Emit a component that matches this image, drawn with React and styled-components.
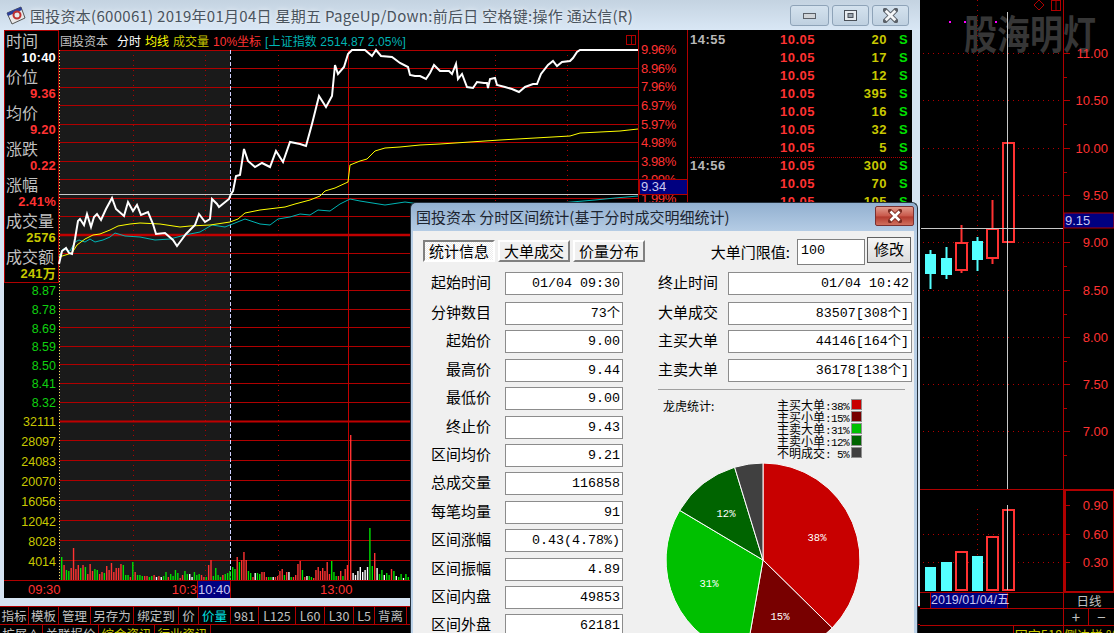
import React from "react";
import styled, { createGlobalStyle } from "styled-components";

const CJK = `"Noto Sans CJK SC", sans-serif`;
const NUM = `"Liberation Sans", "Noto Sans CJK SC", sans-serif`;
const MONO = `"Liberation Mono", "Noto Sans CJK SC", monospace`;

const RED = "#ff3232";
const LINE = "#b00000";
const OLIVE = "#c8c800";

const GlobalStyle = createGlobalStyle`
  html, body {
    margin: 0;
    background: #000;
    overflow: hidden;
  }
  * { box-sizing: border-box; }
`;

const Desktop = styled.div`
  position: relative;
  display: flex;
  width: 1114px;
  height: 633px;
  overflow: hidden;
  font-family: ${CJK};
`;

/* main window */
const MainWindow = styled.div`
  display: flex;
  flex-direction: column;
  width: 920px;
  height: 633px;
  background: #d6e4f2;
`;

const TitleBar = styled.div`
  display: flex;
  align-items: center;
  height: 31px;
  padding: 0 11px 0 6px;
  background: linear-gradient(#c4d3e1, #d9e7f5);
`;

const TitleText = styled.div`
  flex: 1;
  margin-left: 4px;
  font-size: 15px;
  letter-spacing: 0.28px;
  color: #4a545e;
  white-space: nowrap;
  text-shadow: 0 0 5px rgba(255, 255, 255, 0.9);
`;

const WinButtons = styled.div`
  display: flex;
  gap: 3px;
  margin-top: 1px;
`;

const WinButton = styled.div`
  display: flex;
  align-items: center;
  justify-content: center;
  width: ${(p) => p.$w}px;
  height: 21px;
  border: 1px solid #8ea3b8;
  border-radius: 3px;
  background: linear-gradient(#d4e2ee, #bfd0e0);
`;

const Pane = styled.div`
  display: grid;
  grid-template-columns: 55px 579px 50px 224px;
  grid-template-rows: 550px 18px;
  width: 908px;
  height: 568px;
  margin-left: 4px;
  background: #000;
  font-family: ${NUM};
`;

const LeftCol = styled.div`
  display: flex;
  flex-direction: column;
`;

const InfoBox = styled.div`
  height: 253px;
  margin-bottom: 1px;
  border: 1px solid ${LINE};
`;

const InfoLabel = styled.div`
  height: 18px;
  padding-left: 1px;
  font-family: ${CJK};
  font-size: 16px;
  line-height: 18px;
  color: #c0c0c0;
  white-space: nowrap;
`;

const InfoValue = styled.div`
  height: 18px;
  padding-right: 2px;
  font-size: 13px;
  font-weight: 700;
  letter-spacing: 0.2px;
  line-height: 18px;
  text-align: right;
  white-space: nowrap;
  color: ${(p) => p.$color};
`;

const AxisGroup = styled.div`
  display: flex;
  flex-direction: column;
  gap: ${(p) => p.$gap}px;
  margin-top: ${(p) => p.$top}px;
`;

const AxisLabel = styled.div`
  height: 12px;
  padding-right: 3px;
  font-size: 12.5px;
  line-height: 12px;
  text-align: right;
  color: ${(p) => p.$color};
`;

const PlotCol = styled.div`
  display: flex;
  flex-direction: column;
`;

const PlotHead = styled.div`
  display: flex;
  align-items: center;
  gap: 4px;
  height: 20px;
  padding: 0 2px 0 1px;
  font-size: 12px;
  white-space: nowrap;
`;

const HeadItem = styled.span`
  color: ${(p) => p.$color};
  margin-left: ${(p) => p.$gap || 0}px;
  letter-spacing: ${(p) => p.$spaced || 0}px;
`;

const SplitBox = styled.span`
  width: 10px;
  height: 10px;
  margin-left: auto;
  border: 1px solid ${LINE};
  background: linear-gradient(${LINE}, ${LINE}) center / 1px 100% no-repeat;
`;

const ChartSvg = styled.svg`
  display: block;
  overflow: visible;
`;

const RightAxis = styled.div`
  position: relative;
  display: flex;
  flex-direction: column;
  gap: 6.6px;
  padding: 14px 0 0 2px;
  border-left: 1px solid ${LINE};
  border-right: 1px solid ${LINE};
  overflow: hidden;
`;

const AxisPct = styled.div`
  height: 12px;
  font-size: 13px;
  letter-spacing: -0.4px;
  line-height: 12px;
  color: ${RED};
`;

const CursorPrice = styled.div`
  position: absolute;
  left: 0;
  top: 149px;
  width: 49px;
  height: 16px;
  padding-left: 1px;
  border: 1px solid ${LINE};
  background: #000080;
  font-size: 13px;
  line-height: 14px;
  color: #c8c8f0;
`;

const Trades = styled.div`
  grid-column: 4;
  grid-row: 1 / 3;
  padding-top: 1px;
  overflow: hidden;
`;

const TradeRow = styled.div`
  display: grid;
  grid-template-columns: 40px 85px 72px 27px;
  height: 18px;
  margin-left: 2px;
  border-top: ${(p) => (p.$split ? `1px dotted ${LINE}` : "0")};
  font-size: 13px;
  font-weight: 700;
  letter-spacing: 0.5px;
  line-height: ${(p) => (p.$split ? 16 : 18)}px;
`;

const TradeTime = styled.span`
  color: #b8b8b8;
`;

const TradeNum = styled.span`
  text-align: right;
  color: ${(p) => p.$color};
`;

const TradeSide = styled.span`
  padding-left: 12px;
  color: #00e000;
`;

const TimeRow = styled.div`
  grid-column: 1 / 4;
  grid-row: 2;
  display: grid;
  grid-template-columns: 193px 34px 1fr;
  border-top: 1px solid ${LINE};
  font-size: 13px;
  line-height: 17px;
  color: ${RED};
`;

const TimeLeft = styled.div`
  display: flex;
  justify-content: space-between;
  padding-left: 24px;
`;

const TimeCursor = styled.div`
  border-left: 1px solid ${LINE};
  border-right: 1px solid ${LINE};
  background: #000080;
  text-align: center;
  color: #c8c8f0;
`;

const TimeRight = styled.div`
  padding-left: 89px;
`;

const Band = styled.div`
  height: 8px;
`;

const TabBar = styled.div`
  flex: 1;
  border-top: 1px solid ${LINE};
  background: #000;
`;

const TabRow = styled.div`
  display: flex;
  height: ${(p) => p.$h}px;
  border-bottom: ${(p) => (p.$last ? "0" : `1px solid ${LINE}`)};
  overflow: hidden;
`;

const Tab = styled.div`
  width: ${(p) => p.$w}px;
  flex: none;
  border-right: 1px solid ${LINE};
  font-size: 12.5px;
  line-height: 18px;
  text-align: center;
  white-space: nowrap;
  color: ${(p) => p.$color || "#c0c0c0"};
`;

/* candle window on the right */
const SideWindow = styled.div`
  display: flex;
  flex-direction: column;
  width: 194px;
  height: 633px;
  background: #000;
  font-family: ${NUM};
`;

const SideRow = styled.div`
  display: grid;
  grid-template-columns: ${(p) => p.$cols};
  height: ${(p) => p.$h}px;
  border-top: 1px solid ${LINE};
  overflow: hidden;
`;

const DateCell = styled.div`
  padding-left: 10px;
`;

const DateBox = styled.div`
  width: 78px;
  height: 15px;
  border-left: 1px solid ${LINE};
  border-right: 1px solid ${LINE};
  background: #000080;
  font-size: 12.5px;
  line-height: 15px;
  text-align: center;
  white-space: nowrap;
  color: #c8c8f0;
`;

const SideCell = styled.div`
  border-left: ${(p) => (p.$edge ? `1px solid ${LINE}` : "0")};
  font-family: ${CJK};
  font-size: ${(p) => p.$size || 12.5}px;
  line-height: ${(p) => p.$line || 15}px;
  text-align: center;
  white-space: nowrap;
  color: ${(p) => p.$color || "#c0c0c0"};
`;

/* statistics dialog */
const Dialog = styled.div`
  position: absolute;
  left: 410px;
  top: 202px;
  width: 508px;
  height: 431px;
  display: flex;
  flex-direction: column;
  padding: 0 3px 0 2px;
  border: 1px solid #24303c;
  border-bottom: 0;
  border-radius: 6px 6px 0 0;
  background: linear-gradient(#92b0d0, #b7cee6 30px, #bcd2e8);
  overflow: hidden;
`;

const DialogTitle = styled.div`
  display: flex;
  align-items: center;
  justify-content: space-between;
  flex: none;
  height: 28px;
  padding: 0 0 2px 3px;
  font-size: 15px;
  color: #1c2430;
  white-space: nowrap;
`;

const CloseButton = styled.div`
  display: flex;
  align-items: center;
  justify-content: center;
  width: 39px;
  height: 20px;
  border: 1px solid #7a3030;
  border-radius: 2px;
  background: linear-gradient(#e09a8c, #c9584a 50%, #b23a2e 55%, #d0705e);
`;

const DialogBody = styled.div`
  flex: 1;
  padding-top: 6px;
  background: #f0f0f0;
  color: #000;
`;

const DialogTop = styled.div`
  display: flex;
  align-items: flex-start;
  height: 35px;
  padding: 3px 0 0 10px;
`;

const RaisedTab = styled.div`
  width: 72px;
  height: 22px;
  margin-right: 3px;
  border: 2px solid;
  border-color: ${(p) =>
    p.$active ? "#808080 #fff #fff #808080" : "#fff #808080 #808080 #fff"};
  background: ${(p) =>
    p.$active
      ? "repeating-conic-gradient(#fff 0 25%, #ececec 0 50%) 0 0 / 2px 2px"
      : "#f0f0f0"};
  font-size: 15px;
  line-height: 17px;
  text-align: center;
`;

const Threshold = styled.div`
  display: flex;
  align-items: flex-start;
  margin-left: auto;
  margin-top: -3px;
  padding-right: 3px;
`;

const ThresholdLabel = styled.span`
  margin-top: 3px;
  margin-right: 7px;
  font-size: 15px;
  line-height: 24px;
`;

const ThresholdInput = styled.div`
  width: 68px;
  height: 26px;
  margin-top: 2px;
  padding-left: 3px;
  border: 1px solid #808080;
  background: #fff;
  font-family: ${MONO};
  font-size: 13.33px;
  line-height: 22px;
`;

const ThresholdButton = styled.div`
  width: 44px;
  height: 26px;
  margin-left: 2px;
  border: 1px solid #606060;
  background: linear-gradient(#f6f6f6, #dcdcdc);
  font-size: 15px;
  line-height: 22px;
  text-align: center;
`;

const Columns = styled.div`
  display: flex;
`;

const StatGrid = styled.div`
  display: grid;
  grid-template-columns: ${(p) => p.$label}px ${(p) => p.$box}px;
  grid-template-rows: 30px repeat(${(p) => p.$rows}, 28.4px);
  column-gap: ${(p) => p.$gap}px;
  align-content: start;
`;

const StatName = styled.div`
  height: 23px;
  font-size: 15px;
  line-height: 20px;
  text-align: right;
  white-space: nowrap;
`;

const StatBox = styled.div`
  height: 23px;
  padding-right: 2px;
  border: 1px solid #8c8c8c;
  background: #fff;
  font-family: ${MONO};
  font-size: 13.33px;
  line-height: 21px;
  text-align: right;
  white-space: nowrap;
`;

const LeftStats = styled.div`
  width: 246px;
`;

const RightStats = styled.div`
  width: 257px;
`;

const Separator = styled.div`
  width: 247px;
  height: 1px;
  margin-top: 2px;
  background: #a0a0a0;
`;

const StatsHead = styled.div`
  display: flex;
  justify-content: space-between;
  width: 204px;
  height: 73px;
  padding: 8px 0 0 5px;
`;

const StatsTitle = styled.div`
  font-size: 12px;
  line-height: 16px;
`;

const Legend = styled.div`
  display: flex;
  flex-direction: column;
`;

const LegendRow = styled.div`
  display: flex;
  align-items: center;
  justify-content: space-between;
  width: 85px;
  height: 12px;
  font-family: ${MONO};
  font-size: 11px;
  letter-spacing: -0.6px;
  white-space: pre;
`;

const LegendName = styled.span`
  font-family: ${CJK};
  font-size: 12px;
  letter-spacing: 0;
`;

const Swatch = styled.span`
  width: 11px;
  height: 11px;
  border: 1px solid #909090;
  background: ${(p) => p.$color};
`;

const PieSvg = styled.svg`
  display: block;
  margin-left: 2px;
`;

/* data */
const INFO = [
  ["时间", "10:40", "#fff"],
  ["价位", "9.36", RED],
  ["均价", "9.20", RED],
  ["涨跌", "0.22", RED],
  ["涨幅", "2.41%", RED],
  ["成交量", "2576", OLIVE],
  ["成交额", "241万", OLIVE],
];

const PRICES = ["8.87", "8.78", "8.69", "8.59", "8.50", "8.41", "8.32"];
const VOLS = ["32111", "28097", "24083", "20070", "16056", "12042", "8028", "4014"];
const PCTS = ["9.96%", "8.96%", "7.96%", "6.97%", "5.97%", "4.98%", "3.98%", "2.99%", "1.99%"];

const GRID_Y = [51, 69, 88, 106, 125, 143, 162, 180, 199, 217, 254, 273, 291, 310, 328, 347, 365, 384, 403, 441, 461, 481, 501, 521, 541, 561];
const DOT_X = [133, 205, 278, 495, 567];

const PRICE_LINE =
  "59,265 62,252 66,249 69,254 72,255 75,240 78,222 80,220 84,226 87,215 91,228 94,218 97,215 101,221 106,210 112,199 116,210 124,217 128,203 133,212 137,206 141,216 148,213 153,225 156,235 165,234 173,241 177,247 180,243 186,235 195,226 199,215 205,223 210,220 212,200 217,205 219,208 229,200 231,195 233,192 236,177 240,176 244,150 248,162 255,168 262,164 270,168 276,152 283,163 290,143 300,145 306,147 312,125 319,97 326,108 332,97 335,66 338,75 344,68 348,55 352,51 365,51 372,57 376,51 381,57 392,58 400,64 408,68 410,76 415,77 420,77 426,80 430,74 434,66 440,72 449,72 452,75 456,65 458,80 462,75 467,88 473,89 477,83 484,84 487,84 488,89 490,80 495,79 497,86 505,88 512,90 519,93 525,88 533,85 537,85 541,75 548,66 553,62 557,67 562,63 570,62 573,59 577,53 580,51 638,51";
const AVG_LINE =
  "59,258 72,254 77,246 85,240 93,236 100,235 110,231 118,227 130,225 140,224 160,225 180,228 190,227 210,226 230,223 238,220 245,214 260,211 285,208 295,205 310,201 320,197 325,192 335,189 348,183 350,166 360,162 367,160 375,152 385,149 400,148 420,146 440,145 500,141 570,137 580,134 600,133 620,132 638,130";
const INDEX_LINE =
  "59,258 63,250 70,252 75,243 79,241 85,243 90,240 95,243 103,241 110,238 115,234 125,237 140,238 155,241 170,240 185,236 200,233 212,226 225,228 240,222 245,220 260,225 270,226 278,220 290,218 300,215 310,216 318,211 330,212 340,205 350,200 360,202 385,206 405,203 420,205 560,204 595,201 615,199 638,197";

const BAR_COLORS = { r: "#ff3232", g: "#00e000", w: "#ffffff" };
const parseBars = (text, start, step) =>
  text.split(" ").map((item, i) => ({
    x: start + i * step,
    h: parseInt(item, 10),
    color: BAR_COLORS[item.slice(-1)],
  }));

const BARS = [
  ...parseBars(
    "23g 15r 10g 9g 12r 32r 11r 15r 12g 15r 13g 6r 16r 9r 11g 10g 6r 8r 7g 14r 10r 17r 8r 12r 12r 16r 15g 5g 5g 3r 18g 8r 5g 5g 4g 4r 4r 3g 4g 5r 3w 4r 3w 4g 8g 3r 6g 4g 10g 7g 2r 5r 9g 6g 6w 3w 8g 5g 6g 5r 3r 3g 15r 20r 4g 12g 5g 3g 5r 6g 7g 9g",
    61,
    2.37
  ),
  ...parseBars(
    "13g 11g 23r 18g 20r 28r 20r 9g 7g 3r 7w 7g 6g 8r 8r 3r 3g 3g 3w 3r 4r 9r 11r 5g 8r 8w 3g 3r 5r 16r 19r 10g 3r 4w 4g 3g 2r 10r 13r 9r 12r 9r 18r 6r 19g 8g 4g 4r 9r 4g 11r 15r",
    232,
    2.25
  ),
  ...parseBars(
    "145r 7w 5w 9w 13w 8w 10w 13w 52g 14g 27r 12w 6g 10g 5w 7g 5g 11r 9g 4w 3g 6g 2w 6g 3g",
    350,
    2.4
  ),
];

const TRADES = [
  ["14:55", 20],
  ["", 17],
  ["", 12],
  ["", 395],
  ["", 16],
  ["", 32],
  ["", 5],
  ["14:56", 300],
  ["", 70],
  ["", 105],
];

const TABS_TOP = [
  ["指标", 29],
  ["模板", 30],
  ["管理", 32],
  ["另存为", 43],
  ["绑定到", 45],
  ["价", 20],
  ["价量", 32, "#00e0e0"],
  ["981", 28],
  ["L125", 37],
  ["L60", 29],
  ["L30", 29],
  ["L5", 21],
  ["背离", 32],
];
const TABS_BOTTOM = [
  ["扩展∧", 43],
  ["关联报价", 56],
  ["综合资讯", 56, OLIVE],
  ["行业资讯", 56, OLIVE],
];

const LEFT_STATS = [
  ["起始时间", "01/04 09:30"],
  ["分钟数目", "73个"],
  ["起始价", "9.00"],
  ["最高价", "9.44"],
  ["最低价", "9.00"],
  ["终止价", "9.43"],
  ["区间均价", "9.21"],
  ["总成交量", "116858"],
  ["每笔均量", "91"],
  ["区间涨幅", "0.43(4.78%)"],
  ["区间振幅", "4.89"],
  ["区间内盘", "49853"],
  ["区间外盘", "62181"],
];
const RIGHT_STATS = [
  ["终止时间", "01/04 10:42"],
  ["大单成交", "83507[308个]"],
  ["主买大单", "44146[164个]"],
  ["主卖大单", "36178[138个]"],
];

const PIE = [
  { name: "主买大单", pct: "38%", color: "#c80000", to: 134.5, lx: 817, ly: 537 },
  { name: "主买小单", pct: "15%", color: "#780000", to: 190, lx: 780, ly: 616 },
  { name: "主卖大单", pct: "31%", color: "#00c000", to: 300.8, lx: 709, ly: 583 },
  { name: "主卖小单", pct: "12%", color: "#006400", to: 343, lx: 726, ly: 513 },
  { name: "不明成交", pct: " 5%", color: "#404040", to: 360 },
];

const CANDLES = [
  { x: 925, w: 11, top: 254, bot: 274, hi: 250, lo: 289, up: false },
  { x: 941, w: 11, top: 258, bot: 275, hi: 247, lo: 279, up: false },
  { x: 956, w: 11, top: 243, bot: 270, hi: 225, lo: 273, up: true },
  { x: 972, w: 11, top: 241, bot: 260, hi: 237, lo: 271, up: false },
  { x: 987, w: 11, top: 229, bot: 258, hi: 200, lo: 264, up: true },
  { x: 1003, w: 11, top: 143, bot: 242, hi: 143, lo: 242, up: true },
];
const VOL_BARS = [
  { x: 925, top: 567, up: false },
  { x: 941, top: 562, up: false },
  { x: 956, top: 552, up: true },
  { x: 972, top: 556, up: false },
  { x: 987, top: 537, up: true },
  { x: 1003, top: 510, up: true },
];
const SIDE_TICKS = [
  [53, "11.00"],
  [100, "10.50"],
  [148, "10.00"],
  [195, "9.50"],
  [242, "9.00"],
  [290, "8.50"],
  [337, "8.00"],
  [384, "7.50"],
  [431, "7.00"],
];

const CANDLE_UP = "#ff3232";
const CANDLE_DOWN = "#54ffff";

const AppIcon = () => (
  <svg width="20" height="20" viewBox="0 0 20 20">
    <path d="M1 8 L15 2 L19 13 L6 19 Z" fill="#e8e8e8" stroke="#555" />
    <path d="M1 8 L15 2 L16 5 L2 11 Z" fill="#2a3f9a" />
    <circle cx="11" cy="10" r="3.5" fill="none" stroke="#c03030" strokeWidth="2" />
  </svg>
);

const XGlyph = ({ size, color, edge }) => (
  <svg width={size} height={size} viewBox="0 0 14 14">
    <path d="M2 2 L12 12 M12 2 L2 12" stroke={edge} strokeWidth="4.5" strokeLinecap="round" />
    <path d="M2.5 2.5 L11.5 11.5 M11.5 2.5 L2.5 11.5" stroke={color} strokeWidth="2.6" />
  </svg>
);

const MainChart = () => (
  <ChartSvg width="579" height="530" viewBox="59 51 579 530">
    <rect x="59" y="51" width="171" height="530" fill="#1a1a1a" />
    {GRID_Y.map((y) => (
      <line key={y} x1="59" x2="638" y1={y + 0.5} y2={y + 0.5} stroke={LINE} />
    ))}
    <line x1="59" x2="638" y1="236" y2="236" stroke="#c00000" strokeWidth="2.5" />
    <line x1="59" x2="638" y1="422.5" y2="422.5" stroke="#c00000" strokeWidth="2" />
    {DOT_X.map((x) => (
      <line key={x} x1={x + 0.5} x2={x + 0.5} y1="51" y2="581" stroke={LINE} strokeDasharray="1 4" />
    ))}
    <line x1="348.5" x2="348.5" y1="51" y2="581" stroke="#c00000" />
    <line x1="59.5" x2="59.5" y1="51" y2="581" stroke="#ffe060" strokeDasharray="1 2" />
    <line x1="230.5" x2="230.5" y1="51" y2="581" stroke="#d0d0ff" strokeDasharray="4 2" />
    <line x1="59" x2="638" y1="195.5" y2="195.5" stroke="#c8c8c8" />
    {BARS.map((b) => (
      <rect key={b.x} x={b.x} y={581 - b.h} width="1.4" height={b.h} fill={b.color} />
    ))}
    <polyline points={INDEX_LINE} fill="none" stroke="#00b4b4" />
    <polyline points={AVG_LINE} fill="none" stroke="#ffff00" />
    <polyline points={PRICE_LINE} fill="none" stroke="#fff" strokeWidth="2" />
  </ChartSvg>
);

const Candle = ({ c }) => {
  const color = c.up ? CANDLE_UP : CANDLE_DOWN;
  const mid = c.x + c.w / 2;
  return (
    <>
      <line x1={mid} x2={mid} y1={c.hi} y2={c.lo} stroke={color} strokeWidth="2" />
      {c.up ? (
        <rect x={c.x} y={c.top} width={c.w} height={c.bot - c.top} fill="#000" stroke={color} strokeWidth="2" />
      ) : (
        <rect x={c.x} y={c.top} width={c.w} height={c.bot - c.top} fill={color} />
      )}
    </>
  );
};

const SideChart = () => (
  <ChartSvg width="194" height="489" viewBox="920 0 194 489">
    <g fontFamily={CJK} fontWeight="700" fontSize="33" fill="#363636">
      <text transform="translate(964 49) scale(1 1.2)">股海明灯</text>
    </g>
    {SIDE_TICKS.map(([y]) => (
      <line key={y} x1="923" x2="1063" y1={y + 0.5} y2={y + 0.5} stroke={LINE} strokeDasharray="1 4" />
    ))}
    <line x1="977.5" x2="977.5" y1="0" y2="489" stroke={LINE} strokeDasharray="1 4" />
    <rect x="949" y="21" width="2" height="2" fill="#ff00ff" />
    <rect x="964" y="21" width="2" height="2" fill="#ff00ff" />
    <rect x="995" y="21" width="2" height="2" fill="#ff00ff" />
    {CANDLES.map((c) => (
      <Candle key={c.x} c={c} />
    ))}
    <line x1="1007.5" x2="1007.5" y1="12" y2="489" stroke="#c8c8c8" />
    <line x1="921" x2="1063" y1="228.5" y2="228.5" stroke="#c8c8c8" />
    <path d="M1039 0 L1044 5 L1039 10 L1034 5 Z" fill="none" stroke={LINE} />
    <rect x="1051.5" y="0.5" width="9" height="10" fill="none" stroke={LINE} />
    <line x1="1056" x2="1056" y1="0" y2="10" stroke={LINE} />
    <line x1="1063.5" x2="1063.5" y1="0" y2="489" stroke={LINE} />
    {SIDE_TICKS.map(([y, label]) => (
      <g key={label}>
        <line x1="1063" x2="1070" y1={y + 0.5} y2={y + 0.5} stroke={LINE} />
        <line x1="1063" x2="1067" y1={y + 24.5} y2={y + 24.5} stroke={LINE} />
        <text x="1108" y={y + 5} textAnchor="end" fontFamily={NUM} fontSize="13" fill={RED}>
          {label}
        </text>
      </g>
    ))}
    <rect x="1064" y="213" width="50" height="15" fill="#000080" stroke={LINE} />
    <text x="1065" y="225" fontFamily={NUM} fontSize="13" fill="#c8c8f0">
      9.15
    </text>
  </ChartSvg>
);

const SideVolume = () => (
  <ChartSvg width="194" height="103" viewBox="920 489 194 103">
    <line x1="920" x2="1063" y1="489.5" y2="489.5" stroke={LINE} />
    {[534, 562].map((y) => (
      <line key={y} x1="923" x2="1063" y1={y + 0.5} y2={y + 0.5} stroke={LINE} strokeDasharray="1 4" />
    ))}
    <line x1="977.5" x2="977.5" y1="509" y2="590" stroke={LINE} strokeDasharray="1 4" />
    {VOL_BARS.map((b) =>
      b.up ? (
        <rect key={b.x} x={b.x} y={b.top} width="11" height={590 - b.top} fill="#000" stroke={CANDLE_UP} strokeWidth="2" />
      ) : (
        <rect key={b.x} x={b.x} y={b.top} width="11" height={591 - b.top} fill={CANDLE_DOWN} />
      )
    )}
    <line x1="1007.5" x2="1007.5" y1="505" y2="590" stroke="#c8c8c8" />
    <line x1="1063.5" x2="1063.5" y1="489" y2="592" stroke={LINE} />
    <rect x="1065" y="490" width="49" height="102" fill="none" stroke={LINE} strokeWidth="2" />
    {[
      [505, "0.90"],
      [534, "0.60"],
      [562, "0.30"],
    ].map(([y, label]) => (
      <g key={label}>
        <line x1="1065" x2="1070" y1={y + 0.5} y2={y + 0.5} stroke={LINE} />
        <text x="1108" y={y + 5} textAnchor="end" fontFamily={NUM} fontSize="13" fill={RED}>
          {label}
        </text>
      </g>
    ))}
  </ChartSvg>
);

const polar = (deg, r) => {
  const a = ((deg - 90) * Math.PI) / 180;
  return `${(763 + r * Math.cos(a)).toFixed(2)} ${(560 + r * Math.sin(a)).toFixed(2)}`;
};

const Pie = () => {
  let from = 0;
  return (
    <PieSvg width="210" height="170" viewBox="660 463 210 170">
      {PIE.map((s) => {
        const large = s.to - from > 180 ? 1 : 0;
        const d = `M763 560 L${polar(from, 97)} A97 97 0 ${large} 1 ${polar(s.to, 97)} Z`;
        from = s.to;
        return <path key={s.name} d={d} fill={s.color} stroke="#fff" strokeWidth="1" />;
      })}
      <circle cx="763" cy="560" r="97.5" fill="none" stroke="#f0f0f0" strokeWidth="1.2" />
      {PIE.filter((s) => s.lx).map((s) => (
        <text key={s.name} x={s.lx} y={s.ly + 4} textAnchor="middle" fontFamily={MONO} fontSize="10.5" fill="#fff">
          {s.pct}
        </text>
      ))}
    </PieSvg>
  );
};

export default function App() {
  return (
    <>
      <GlobalStyle />
      <Desktop>
        <MainWindow>
          <TitleBar>
            <AppIcon />
            <TitleText>国投资本(600061) 2019年01月04日 星期五 PageUp/Down:前后日 空格键:操作 通达信(R)</TitleText>
            <WinButtons>
              <WinButton $w={39}>
                <svg width="13" height="6" viewBox="0 0 13 6">
                  <rect x="0.5" y="0.5" width="12" height="5" fill="#d0d4d8" stroke="#5a6068" />
                </svg>
              </WinButton>
              <WinButton $w={37}>
                <svg width="13" height="11" viewBox="0 0 13 11">
                  <rect x="0.5" y="0.5" width="12" height="10" fill="#e8ecf0" stroke="#4a5058" />
                  <rect x="4" y="3.5" width="5" height="4" fill="#9aa4ae" stroke="#4a5058" />
                </svg>
              </WinButton>
              <WinButton $w={37}>
                <XGlyph size={15} color="#f4f6f8" edge="#5a6068" />
              </WinButton>
            </WinButtons>
          </TitleBar>
          <Pane>
            <LeftCol>
              <InfoBox>
                {INFO.map(([name, value, color]) => (
                  <React.Fragment key={name}>
                    <InfoLabel>{name}</InfoLabel>
                    <InfoValue $color={color}>{value}</InfoValue>
                  </React.Fragment>
                ))}
              </InfoBox>
              <AxisGroup $gap={6.67} $top={1}>
                {PRICES.map((p) => (
                  <AxisLabel key={p} $color="#10d010">
                    {p}
                  </AxisLabel>
                ))}
              </AxisGroup>
              <AxisGroup $gap={8} $top={7}>
                {VOLS.map((v) => (
                  <AxisLabel key={v} $color={OLIVE}>
                    {v}
                  </AxisLabel>
                ))}
              </AxisGroup>
            </LeftCol>
            <PlotCol>
              <PlotHead>
                <HeadItem $color="#c0c0c0">国投资本</HeadItem>
                <HeadItem $color="#fff" $gap={5}>分时</HeadItem>
                <HeadItem $color="#ffff00">均线</HeadItem>
                <HeadItem $color={OLIVE}>成交量</HeadItem>
                <HeadItem $color={RED}>10%坐标</HeadItem>
                <HeadItem $color="#00b4b4" $spaced={0.1}>[上证指数 2514.87 2.05%]</HeadItem>
                <SplitBox />
              </PlotHead>
              <MainChart />
            </PlotCol>
            <RightAxis>
              {PCTS.map((p) => (
                <AxisPct key={p}>{p}</AxisPct>
              ))}
              <CursorPrice>9.34</CursorPrice>
            </RightAxis>
            <Trades>
              {TRADES.map(([time, vol], i) => (
                <TradeRow key={i} $split={i === 7}>
                  <TradeTime>{time}</TradeTime>
                  <TradeNum $color={RED}>10.05</TradeNum>
                  <TradeNum $color={OLIVE}>{vol}</TradeNum>
                  <TradeSide>S</TradeSide>
                </TradeRow>
              ))}
            </Trades>
            <TimeRow>
              <TimeLeft>
                <span>09:30</span>
                <span>10:3</span>
              </TimeLeft>
              <TimeCursor>10:40</TimeCursor>
              <TimeRight>13:00</TimeRight>
            </TimeRow>
          </Pane>
          <Band />
          <TabBar>
            <TabRow $h={18}>
              {TABS_TOP.map(([name, w, color]) => (
                <Tab key={name} $w={w} $color={color}>
                  {name}
                </Tab>
              ))}
            </TabRow>
            <TabRow $h={8} $last>
              {TABS_BOTTOM.map(([name, w, color]) => (
                <Tab key={name} $w={w} $color={color}>
                  {name}
                </Tab>
              ))}
            </TabRow>
          </TabBar>
        </MainWindow>

        <SideWindow>
          <SideChart />
          <SideVolume />
          <SideRow $cols="143px 51px" $h={16}>
            <DateCell>
              <DateBox>2019/01/04/五</DateBox>
            </DateCell>
            <SideCell $edge>日线</SideCell>
          </SideRow>
          <SideRow $cols="143px 25px 26px" $h={17}>
            <div />
            <SideCell $edge $size={15} $line={15}>+</SideCell>
            <SideCell $edge $size={15} $line={15}>−</SideCell>
          </SideRow>
          <SideRow $cols="93px 50px 51px" $h={8}>
            <div />
            <SideCell $edge $size={13} $line={17} $color={OLIVE}>固定518</SideCell>
            <SideCell $edge $size={13} $line={17} $color={OLIVE}>侧边栏 %</SideCell>
          </SideRow>
        </SideWindow>

        <Dialog>
          <DialogTitle>
            国投资本 分时区间统计(基于分时成交明细统计)
            <CloseButton>
              <XGlyph size={14} color="#fff" edge="#7a2a20" />
            </CloseButton>
          </DialogTitle>
          <DialogBody>
            <DialogTop>
              <RaisedTab $active>统计信息</RaisedTab>
              <RaisedTab>大单成交</RaisedTab>
              <RaisedTab>价量分布</RaisedTab>
              <Threshold>
                <ThresholdLabel>大单门限值:</ThresholdLabel>
                <ThresholdInput>100</ThresholdInput>
                <ThresholdButton>修改</ThresholdButton>
              </Threshold>
            </DialogTop>
            <Columns>
              <LeftStats>
                <StatGrid $label={78} $box={118} $gap={14} $rows={12}>
                  {LEFT_STATS.map(([name, value]) => (
                    <React.Fragment key={name}>
                      <StatName>{name}</StatName>
                      <StatBox>{value}</StatBox>
                    </React.Fragment>
                  ))}
                </StatGrid>
              </LeftStats>
              <RightStats>
                <StatGrid $label={60} $box={184} $gap={10} $rows={3}>
                  {RIGHT_STATS.map(([name, value]) => (
                    <React.Fragment key={name}>
                      <StatName>{name}</StatName>
                      <StatBox>{value}</StatBox>
                    </React.Fragment>
                  ))}
                </StatGrid>
                <Separator />
                <StatsHead>
                  <StatsTitle>龙虎统计:</StatsTitle>
                  <Legend>
                    {PIE.map((s) => (
                      <LegendRow key={s.name}>
                        <span>
                          <LegendName>{s.name}</LegendName>:{s.pct}
                        </span>
                        <Swatch $color={s.color} />
                      </LegendRow>
                    ))}
                  </Legend>
                </StatsHead>
                <Pie />
              </RightStats>
            </Columns>
          </DialogBody>
        </Dialog>
      </Desktop>
    </>
  );
}
